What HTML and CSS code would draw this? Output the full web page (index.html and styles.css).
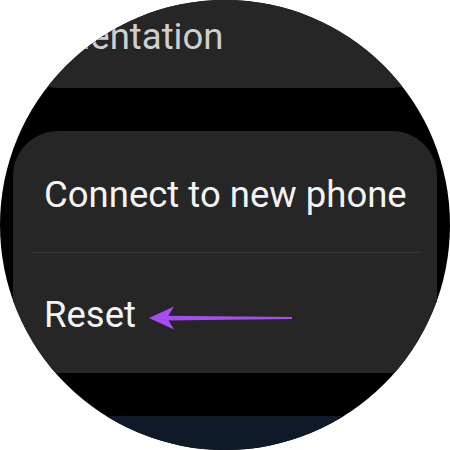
FILE: index.html
```html
<!DOCTYPE html>
<html>
<head>
<meta charset="utf-8">
<link rel="stylesheet" href="styles.css">
</head>
<body>
<div class="watch">
  <div class="card card-top">
    <div class="row faded">Orientation</div>
  </div>
  <div class="card card-main">
    <div class="row row-first">Connect to new phone</div>
    <div class="divider"></div>
    <div class="row row-second">Reset</div>
  </div>
  <div class="card card-next"></div>
  <svg class="arrow" width="450" height="450" viewBox="0 0 450 450">
    <path d="M149 318 L174 306.5 L167 318 L174 329.5 Z" fill="#a74cf2"/>
    <path d="M165 315.8 L292 317 L292 319 L165 320.6 Z" fill="#a74cf2"/>
  </svg>
</div>
</body>
</html>
```
FILE: styles.css
```css
html, body {
  margin: 0;
  padding: 0;
  background: #ffffff;
}
.watch {
  position: relative;
  width: 450px;
  height: 450px;
  border-radius: 50%;
  overflow: hidden;
  background: #000000;
  display: flex;
  flex-direction: column;
  align-items: stretch;
  font-family: Roboto, "Noto Sans", sans-serif;
  font-size: 36.5px;
  line-height: 42px;
  color: #f4f4f4;
}
.card {
  background: #262626;
  margin: 0 13px;
  flex: none;
}
.card-top {
  height: 88px;
  border-radius: 0 0 45px 45px;
  box-sizing: border-box;
  padding-top: 16px;
}
.card-main {
  margin-top: 43px;
  border-radius: 45px;
}
.card-next {
  margin-top: 43px;
  height: 120px;
  background: #0e1a28;
  border-radius: 45px 45px 0 0;
}
.row {
  padding: 0 31px;
  white-space: nowrap;
}
.faded {
  color: #cfcfcf;
}
.row-first {
  padding-top: 43px;
  padding-bottom: 36px;
}
.row-second {
  padding-top: 41px;
  padding-bottom: 37px;
}
.divider {
  height: 1px;
  margin: 0 18px;
  background: #3a3a3a;
}
.arrow {
  position: absolute;
  left: 0;
  top: 0;
}
```
